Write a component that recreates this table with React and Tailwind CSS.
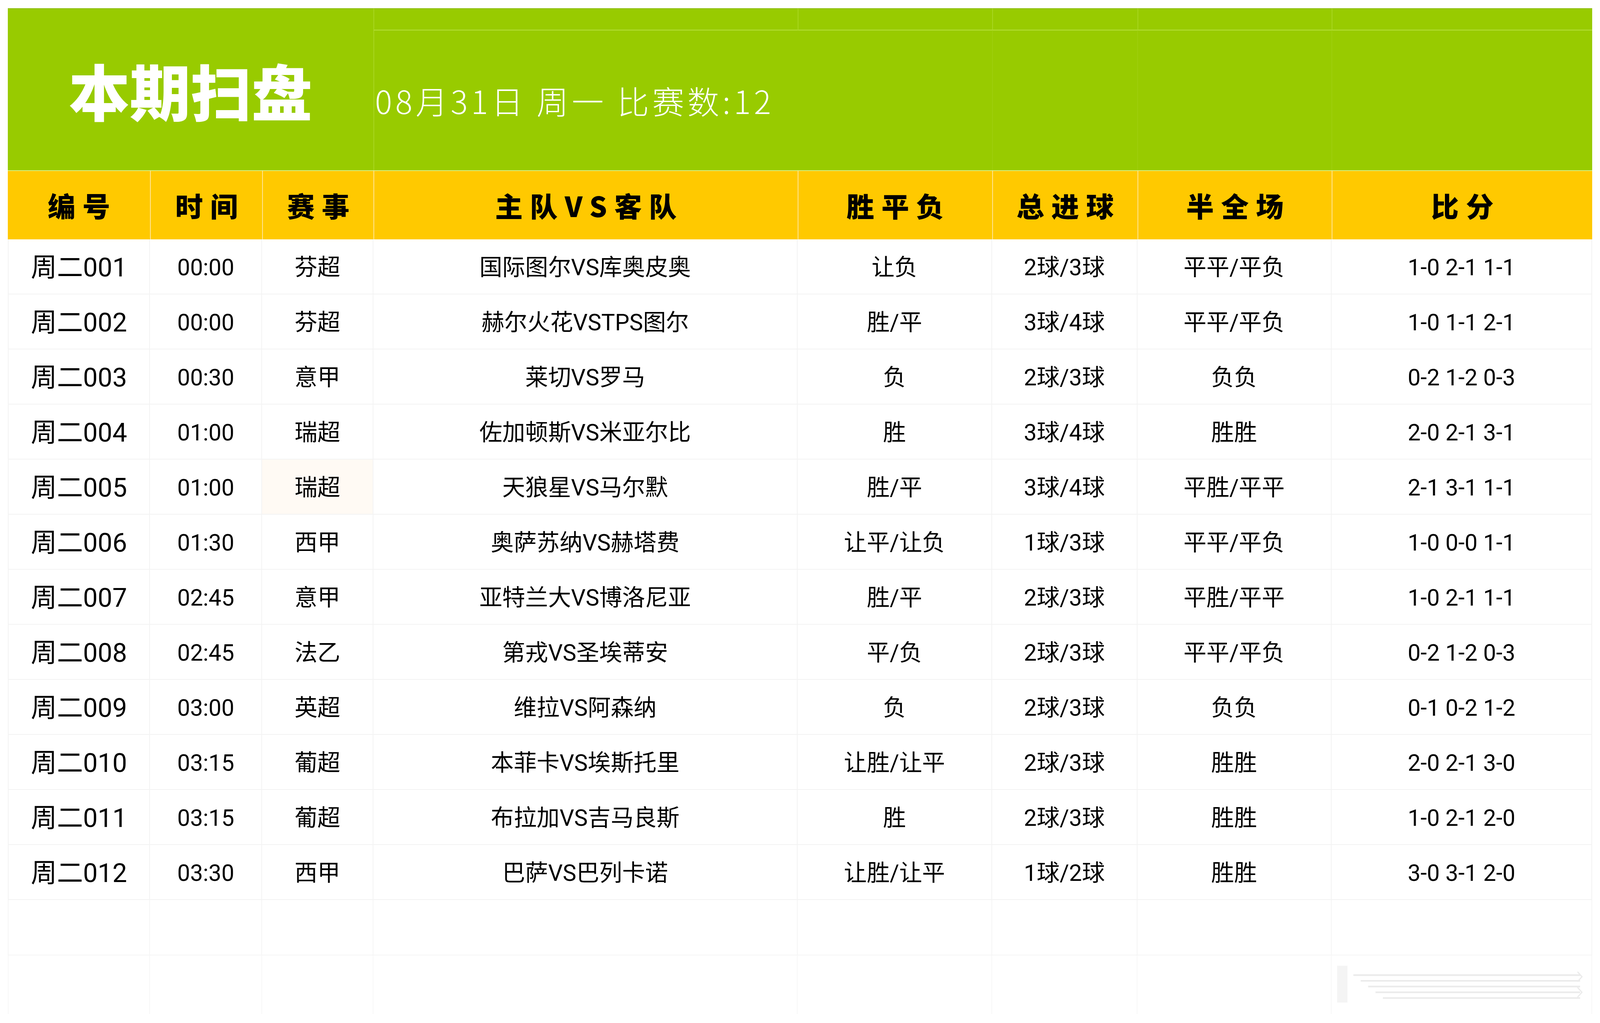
import React from 'react';

const rows = [
    ['周二001', '00:00', '芬超', '国际图尔VS库奥皮奥', '让负', '2球/3球', '平平/平负', '1-0 2-1 1-1'],
    ['周二002', '00:00', '芬超', '赫尔火花VSTPS图尔', '胜/平', '3球/4球', '平平/平负', '1-0 1-1 2-1'],
    ['周二003', '00:30', '意甲', '莱切VS罗马', '负', '2球/3球', '负负', '0-2 1-2 0-3'],
    ['周二004', '01:00', '瑞超', '佐加顿斯VS米亚尔比', '胜', '3球/4球', '胜胜', '2-0 2-1 3-1'],
    ['周二005', '01:00', '瑞超', '天狼星VS马尔默', '胜/平', '3球/4球', '平胜/平平', '2-1 3-1 1-1'],
    ['周二006', '01:30', '西甲', '奥萨苏纳VS赫塔费', '让平/让负', '1球/3球', '平平/平负', '1-0 0-0 1-1'],
    ['周二007', '02:45', '意甲', '亚特兰大VS博洛尼亚', '胜/平', '2球/3球', '平胜/平平', '1-0 2-1 1-1'],
    ['周二008', '02:45', '法乙', '第戎VS圣埃蒂安', '平/负', '2球/3球', '平平/平负', '0-2 1-2 0-3'],
    ['周二009', '03:00', '英超', '维拉VS阿森纳', '负', '2球/3球', '负负', '0-1 0-2 1-2'],
    ['周二010', '03:15', '葡超', '本菲卡VS埃斯托里', '让胜/让平', '2球/3球', '胜胜', '2-0 2-1 3-0'],
    ['周二011', '03:15', '葡超', '布拉加VS吉马良斯', '胜', '2球/3球', '胜胜', '1-0 2-1 2-0'],
    ['周二012', '03:30', '西甲', '巴萨VS巴列卡诺', '让胜/让平', '1球/2球', '胜胜', '3-0 3-1 2-0'],
];

const headers = ['编号', '时间', '赛事', '主队VS客队', '胜平负', '总进球', '半全场', '比分'];

const greenLine = 'border-[#a9d622]';

const App = () => {
    return (
        <div className="relative w-full h-screen overflow-hidden bg-white pt-[0.8vh] px-[0.4853vw] font-['Roboto','Noto_Sans_CJK_SC',sans-serif] text-black">
            <div className="grid grid-cols-[385fr_303fr_301fr_1147fr_526fr_393fr_525fr_705fr] w-full">
                {/* green banner */}
                <div className="col-span-3 row-span-2 bg-[#98cb00] border-t-2 border-t-[#8fbd12] flex items-center justify-center">
                    <span className="font-['Noto_Sans_CJK_SC',sans-serif] font-black text-[5.95vh] leading-none text-white whitespace-nowrap">
                        本期扫盘
                    </span>
                </div>
                {[0, 1, 2, 3, 4].map(i => (
                    <div key={i} className={`h-[2.176vh] bg-[#98cb00] border-t-2 border-t-[#8fbd12] border-l-2 border-b-2 ${greenLine} border-b-[#b6e03e]`}></div>
                ))}
                <div className={`col-span-2 h-[13.664vh] bg-[#98cb00] border-l-2 ${greenLine} flex items-center pl-[2px]`}>
                    <span className="font-['Noto_Sans_CJK_SC',sans-serif] font-light text-[3.12vh] leading-none text-white tracking-[0.1em] whitespace-nowrap">
                        08月31日 周一 比赛数:12
                    </span>
                </div>
                <div className="h-[13.664vh] bg-[#98cb00] border-l border-[#a2d018]"></div>
                <div className="h-[13.664vh] bg-[#98cb00] border-l border-[#a2d018]"></div>
                <div className="h-[13.664vh] bg-[#98cb00] border-l border-[#a2d018]"></div>

                {/* yellow header */}
                {headers.map((h, i) => (
                    <div
                        key={h}
                        className={`h-[6.756vh] bg-[#ffc900] border-t-2 border-t-[#dcef86] flex items-center justify-center ${i > 0 ? 'border-l-2 border-l-[#ffe59a]' : ''}`}
                    >
                        <span className="font-['Noto_Sans_CJK_SC',sans-serif] font-black text-[2.7vh] leading-none tracking-[0.26em] pl-[0.26em] whitespace-nowrap">
                            {h}
                        </span>
                    </div>
                ))}

                {/* data rows */}
                {rows.map((r, ri) =>
                    r.map((c, ci) => (
                        <div
                            key={ri + '-' + ci}
                            className={`h-[5.382vh] border-b-2 border-r-2 border-[#f3f3f3] flex items-center justify-center pt-[0.23vh] ${ci === 0 ? 'border-l-2 text-[2.55vh]' : 'text-[2.24vh]'} ${ri === 4 && ci === 2 ? 'bg-[#fffaf4]' : 'bg-white'}`}
                        >
                            <span className="leading-none whitespace-nowrap">{c}</span>
                        </div>
                    ))
                )}

                {/* empty rows */}
                {headers.map((h, ci) => (
                    <div key={'e1' + ci} className={`h-[5.42vh] border-b-2 border-r-2 border-[#f5f5f5] ${ci === 0 ? 'border-l-2' : ''}`}></div>
                ))}
                {headers.map((h, ci) => (
                    <div key={'e2' + ci} className={`h-[5.72vh] border-r-2 border-[#f7f7f7] ${ci === 0 ? 'border-l-2' : ''}`}></div>
                ))}
            </div>

            {/* faint watermark */}
            <svg className="absolute left-[83.2%] top-[94.2vh] w-[15.9%] h-[4.4vh] opacity-40" viewBox="0 0 690 110" preserveAspectRatio="none">
                <rect x="16" y="5" width="28" height="90" fill="#e6e6e6" />
                {[28, 42, 56, 70, 84].map((y, i) => (
                    <line key={y} x1={60 + i * 20} y1={y} x2="675" y2={y} stroke="#cfcfcf" strokeWidth="4" />
                ))}
                <path d="M668 20 L680 32 L668 44 M668 58 L680 70 L668 82" stroke="#cfcfcf" strokeWidth="3" fill="none" />
            </svg>
        </div>
    );
};

export default App;
